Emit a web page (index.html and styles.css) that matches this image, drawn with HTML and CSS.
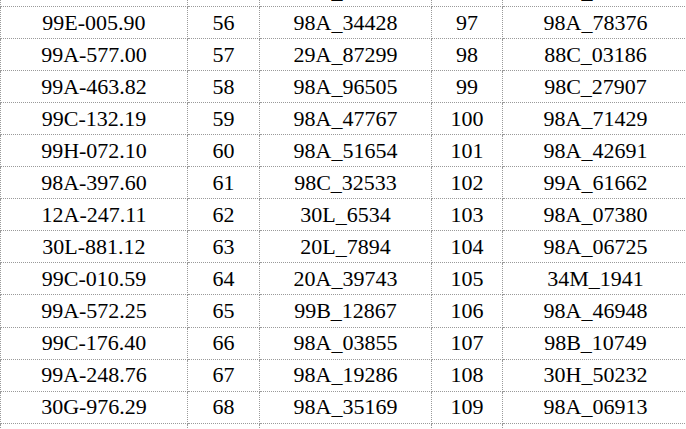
FILE: index.html
```html
<!DOCTYPE html>
<html>
<head>
<meta charset="utf-8">
<link rel="stylesheet" href="styles.css">
</head>
<body>
<table class="grid">
<colgroup>
<col class="c1"><col class="c2"><col class="c3"><col class="c4"><col class="c5">
</colgroup>
<tbody>
<tr class="prev"><td>99A-100.00</td><td>55</td><td>98A_12345</td><td>96</td><td>98A_12345</td></tr>
<tr><td>99E-005.90</td><td>56</td><td>98A_34428</td><td>97</td><td>98A_78376</td></tr>
<tr><td>99A-577.00</td><td>57</td><td>29A_87299</td><td>98</td><td>88C_03186</td></tr>
<tr><td>99A-463.82</td><td>58</td><td>98A_96505</td><td>99</td><td>98C_27907</td></tr>
<tr><td>99C-132.19</td><td>59</td><td>98A_47767</td><td>100</td><td>98A_71429</td></tr>
<tr><td>99H-072.10</td><td>60</td><td>98A_51654</td><td>101</td><td>98A_42691</td></tr>
<tr><td>98A-397.60</td><td>61</td><td>98C_32533</td><td>102</td><td>99A_61662</td></tr>
<tr><td>12A-247.11</td><td>62</td><td>30L_6534</td><td>103</td><td>98A_07380</td></tr>
<tr><td>30L-881.12</td><td>63</td><td>20L_7894</td><td>104</td><td>98A_06725</td></tr>
<tr><td>99C-010.59</td><td>64</td><td>20A_39743</td><td>105</td><td>34M_1941</td></tr>
<tr><td>99A-572.25</td><td>65</td><td>99B_12867</td><td>106</td><td>98A_46948</td></tr>
<tr><td>99C-176.40</td><td>66</td><td>98A_03855</td><td>107</td><td>98B_10749</td></tr>
<tr><td>99A-248.76</td><td>67</td><td>98A_19286</td><td>108</td><td>30H_50232</td></tr>
<tr><td>30G-976.29</td><td>68</td><td>98A_35169</td><td>109</td><td>98A_06913</td></tr>
<tr class="next"><td>&nbsp;</td><td>&nbsp;</td><td>&nbsp;</td><td>&nbsp;</td><td>&nbsp;</td></tr>
</tbody>
</table>
</body>
</html>
```

FILE: styles.css
```css
html, body {
  margin: 0;
  padding: 0;
  background: #ffffff;
  overflow: hidden;
}
body {
  width: 686px;
  height: 429px;
  font-family: "Liberation Serif", "Times New Roman", serif;
  font-size: 22px;
  color: #000;
}
.grid {
  border-collapse: collapse;
  table-layout: fixed;
  width: 688px;
  margin-top: -26px;
}
.c1 { width: 187px; }
.c2 { width: 72px; }
.c3 { width: 172px; }
.c4 { width: 71px; }
.c5 { width: 186px; }
.grid td {
  border: 1px dotted #9a9a9a;
  height: 31.05px;
  padding: 0;
  text-align: center;
  vertical-align: middle;
  line-height: 22px;
  white-space: nowrap;
}
```
